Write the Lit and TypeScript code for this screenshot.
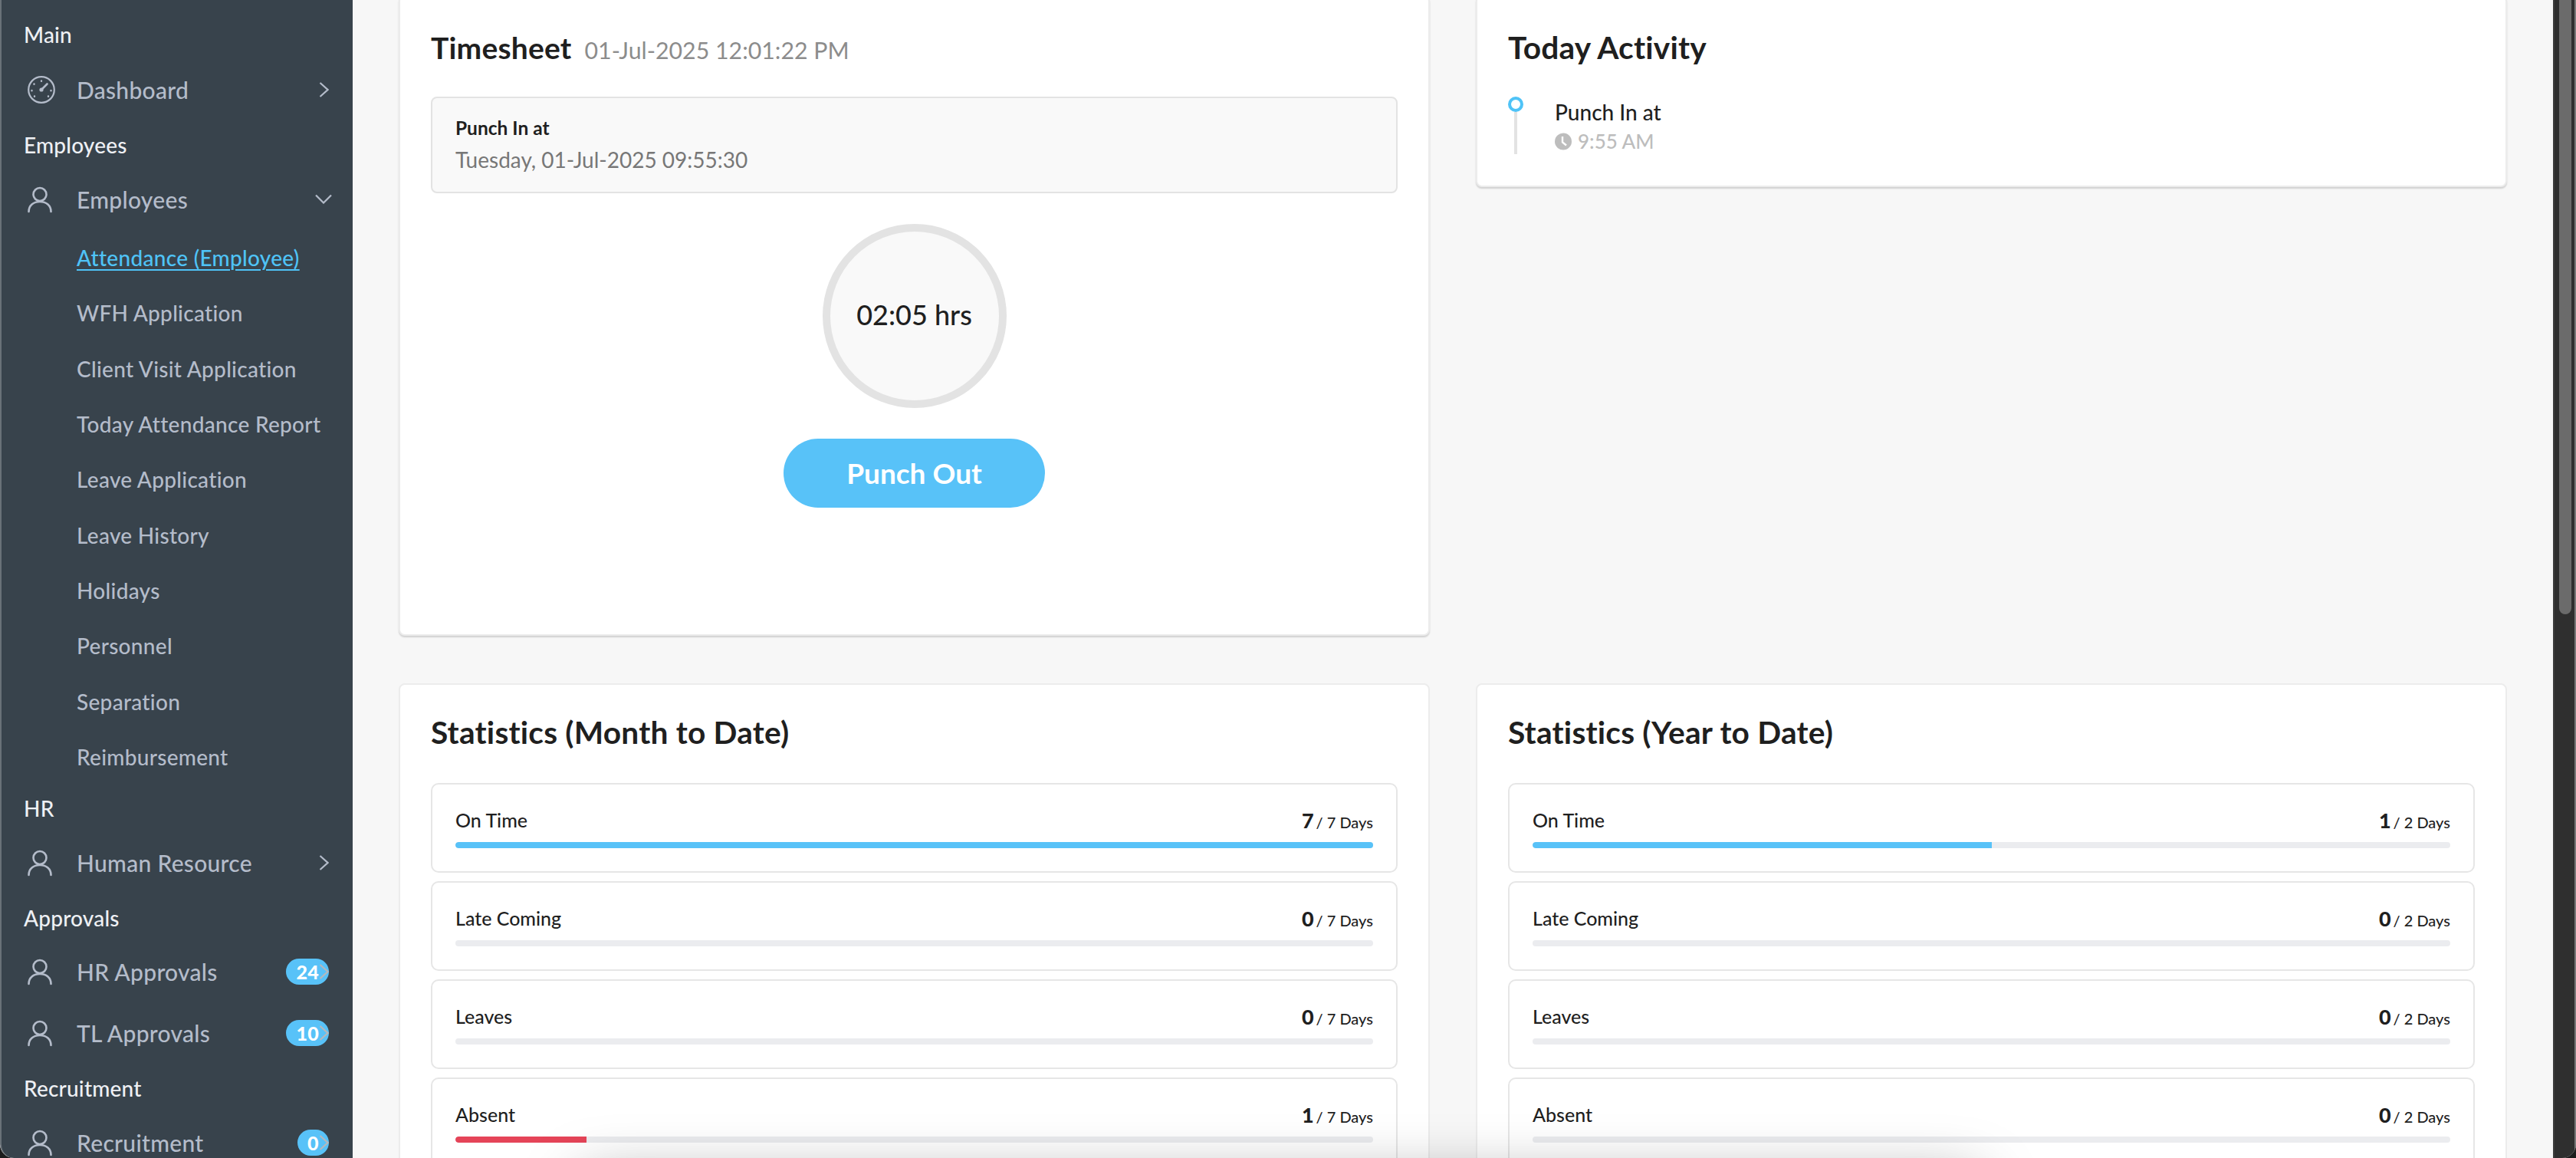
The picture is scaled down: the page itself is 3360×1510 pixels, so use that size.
import { LitElement, html, css } from "lit";
import { customElement } from "lit/decorators.js";

const userIcon = html`<svg class="ic" viewBox="0 0 36 36" fill="none" stroke="currentColor" stroke-width="2.6" stroke-linecap="round"><circle cx="16" cy="11.5" r="8.5"/><path d="M1.5 34c0-8 6-13 14.500-13s14.500 5 14.500 13"/></svg>`;
const gaugeIcon = html`<svg class="ic" viewBox="0 0 36 36" fill="none" stroke="currentColor" stroke-width="2.200" stroke-linecap="round"><circle cx="18" cy="18" r="16.800"/><circle cx="18" cy="18" r="2.600" fill="currentColor" stroke="none"/><path d="M18 18l7.500-7.500" stroke-width="2.600"/><path d="M18 6.500v.2M8.500 10.500v.2M5.500 19v.2M9 26.500v.2M27 26.500v.2M30.500 19v.2" stroke-width="2.400"/></svg>`;
const chevR = html`<svg class="chev" viewBox="0 0 13 20" fill="none" stroke="currentColor" stroke-width="2.200"><path d="M1.500 1l10 9-10 9"/></svg>`;
const chevD = html`<svg class="chevd" viewBox="0 0 22 13" fill="none" stroke="currentColor" stroke-width="2.200"><path d="M1 1.500l10 10 10-10"/></svg>`;

const subs = ["WFH Application", "Client Visit Application", "Today Attendance Report", "Leave Application", "Leave History", "Holidays", "Personnel", "Separation", "Reimbursement"];

interface Stat { label: string; val: number; color?: string; }

@customElement("app-root")
export class AppRoot extends LitElement {
  static styles = css`
    :host { display: block; width: 3360px; height: 1510px; overflow: hidden; position: relative; background: #1c1c1c; font-family: "Lato", "Liberation Sans", sans-serif; color: #1f1f1f; }
    * { box-sizing: border-box; }
    .win { width: 3360px; height: 1510px; display: flex; overflow: hidden; border-radius: 0 0 18px 18px; background: #f7f7f7; position: relative; }
    .side { width: 460px; flex: none; background: #38434c; border-left: 2px solid #697178; padding: 9px 0 0 29px; overflow: hidden; border-bottom-left-radius: 18px; }
    .label { height: 72px; display: flex; align-items: center; color: #eef0f4; font-size: 28px; font-weight: 500; letter-spacing: 0.2px; }
    .item { height: 72px; display: flex; align-items: center; color: #b4bcca; font-size: 30px; font-weight: 500; position: relative; padding-right: 31px; letter-spacing: 0.3px; }
    .item.b { height: 80px; }
    .up { margin-top: -1px; }
    .ic { width: 36px; height: 36px; margin-left: 5px; margin-right: 28px; flex: none; color: #b4bcca; }
    .chev { width: 13px; height: 20px; position: absolute; right: 31px; top: 50%; margin-top: -10px; color: #b4bcca; }
    .chevd { width: 22px; height: 13px; position: absolute; right: 27px; top: 29px; color: #b4bcca; }
    .sub { height: 72.3px; display: flex; align-items: center; padding-left: 69px; color: #b4bcca; font-size: 28px; font-weight: 500; letter-spacing: 0.3px; }
    .active { color: #4fc3f7; text-decoration: underline; text-underline-offset: 4px; text-decoration-thickness: 2px; }
    .first { margin-top: 4px; }
    .tight5 { margin-top: -5px; }
    .tight6 { margin-top: -6px; }
    .tight4 { margin-top: -4px; }
    .badge { position: absolute; right: 31px; top: 23px; height: 34px; border-radius: 17px; background: #58c2f8; color: #fff; font-size: 25px; font-weight: 900; display: flex; align-items: center; padding: 0 13px; min-width: 41px; }
    .badge + .chev { color: #b4b8bd; }
    .main { flex: 1; min-width: 0; padding: 0 60px; overflow: hidden; position: relative; }
    .grid { display: grid; grid-template-columns: 1fr 1fr; column-gap: 60px; margin-top: -6px; align-items: start; }
    .card { background: #fff; border: 2px solid #ececec; border-radius: 8px; padding: 43px 40px 0; }
    .shadow { box-shadow: 0 2px 2px rgba(0, 0, 0, 0.16); }
    .top { padding-top: 47px; }
    .ts { height: 835px; display: flex; flex-direction: column; }
    .act { height: 250px; }
    .stats { height: 700px; margin-top: 62px; }
    h2 { margin: 0; height: 38px; font-size: 40.700px; line-height: 38px; font-weight: 700; color: #1f1f1f; white-space: nowrap; letter-spacing: 0.2px; display: flex; align-items: baseline; }
    h2.ts-t { font-size: 39px; }
    h2 small { font-size: 30.300px; font-weight: 400; color: #8c8c8c; margin-left: 17px; letter-spacing: 0; }
    .box { margin-top: 45px; height: 126px; background: #f9f9f9; border: 2px solid #e3e3e3; border-radius: 8px; padding: 16px 30px 0; }
    .box b { display: block; font-size: 24.500px; line-height: 46px; font-weight: 700; color: #1f1f1f; }
    .box span { display: block; font-size: 28px; line-height: 36px; color: #777; }
    .circle { width: 240px; height: 240px; border: 10px solid #e3e3e3; border-radius: 50%; background: #f9f9f9; display: flex; align-items: center; justify-content: center; font-size: 36px; font-weight: 500; margin: 40px auto 0; color: #1f1f1f; padding-bottom: 4px; }
    .btn { width: 341px; height: 90px; border-radius: 45px; background: #58c2f8; color: #fff; font-size: 37px; font-weight: 700; margin: 40px auto 0; display: flex; align-items: center; justify-content: center; padding-bottom: 2px; }
    .tl { margin-top: 45px; display: flex; }
    .tlc { width: 20px; display: flex; flex-direction: column; align-items: center; margin-right: 41px; }
    .dot { width: 20px; height: 20px; border: 4px solid #4fc3f7; border-radius: 50%; }
    .line { width: 4px; height: 55px; background: #e3e3e3; }
    .tlt { font-size: 28px; line-height: 40px; color: #1f1f1f; font-weight: 500; }
    .tlm { display: flex; align-items: center; color: #bdbdbd; font-size: 26px; line-height: 36px; font-weight: 500; }
    .tlm svg { width: 22px; height: 23px; margin-right: 8px; }
    .rows { margin-top: 47px; display: flex; flex-direction: column; gap: 11px; }
    .row { height: 117px; border: 2px solid #e6e6e6; border-radius: 10px; padding: 26px 30px 0; flex: none; }
    .rh { display: flex; justify-content: space-between; align-items: center; height: 40px; font-size: 25px; font-weight: 500; color: #1f1f1f; }
    .rv { font-size: 20px; font-weight: 500; }
    .rv b { font-size: 27px; font-weight: 900; margin-right: -2px; }
    .track { margin-top: 9px; height: 8px; border-radius: 4px; background: #ebecef; overflow: hidden; }
    .fill { height: 100%; border-radius: 4px 0 0 4px; }
    .sb { width: 30px; flex: none; background: #2f2f2f; border-left: 2px solid #3c3c3c; border-right: 2px solid #777; padding-left: 6px; }
    .thumb { width: 16px; height: 801px; background: #6b6b6b; border-radius: 0 0 8px 8px; }
    .dock { position: absolute; left: 760px; bottom: -100px; width: 1820px; height: 70px; box-shadow: 0 0 80px rgba(0, 0, 0, 0.4); pointer-events: none; }
  `;

  private statRows(total: number, items: Stat[]) {
    return html`<div class="rows">${items.map((s) => html`
      <div class="row">
        <div class="rh"><span>${s.label}</span><span class="rv"><b>${s.val}</b> / ${total} Days</span></div>
        <div class="track"><div class="fill" style="width:${(s.val / total) * 100}%;background:${s.color ?? "#58c2f8"}"></div></div>
      </div>`)}</div>`;
  }

  render() {
    return html`<div class="win">
      <nav class="side">
        <div class="label">Main</div>
        <div class="item">${gaugeIcon}Dashboard${chevR}</div>
        <div class="label">Employees</div>
        <div class="item up">${userIcon}Employees${chevD}</div>
        <div class="sub first"><span class="active">Attendance (Employee)</span></div>
        ${subs.map((s) => html`<div class="sub">${s}</div>`)}
        <div class="label tight5">HR</div>
        <div class="item up">${userIcon}Human Resource${chevR}</div>
        <div class="label">Approvals</div>
        <div class="item b tight6">${userIcon}HR Approvals<span class="badge">24</span>${chevR}</div>
        <div class="item b">${userIcon}TL Approvals<span class="badge">10</span>${chevR}</div>
        <div class="label tight4">Recruitment</div>
        <div class="item b tight5">${userIcon}Recruitment<span class="badge">0</span>${chevR}</div>
      </nav>
      <main class="main">
        <div class="grid">
          <section class="card top shadow ts">
            <h2 class="ts-t">Timesheet <small>01-Jul-2025 12:01:22 PM</small></h2>
            <div class="box"><b>Punch In at</b><span>Tuesday, 01-Jul-2025 09:55:30</span></div>
            <div class="circle">02:05 hrs</div>
            <div class="btn">Punch Out</div>
          </section>
          <section class="card top shadow act">
            <h2>Today Activity</h2>
            <div class="tl">
              <div class="tlc"><div class="dot"></div><div class="line"></div></div>
              <div>
                <div class="tlt">Punch In at</div>
                <div class="tlm"><svg viewBox="0 0 22 22"><circle cx="11" cy="11" r="11" fill="#bdbdbd"/><path d="M10 4.500v7.500l5 4" fill="none" stroke="#fff" stroke-width="2.400"/></svg>9:55 AM</div>
              </div>
            </div>
          </section>
          <section class="card stats">
            <h2>Statistics (Month to Date)</h2>
            ${this.statRows(7, [{ label: "On Time", val: 7 }, { label: "Late Coming", val: 0 }, { label: "Leaves", val: 0 }, { label: "Absent", val: 1, color: "#e54458" }])}
          </section>
          <section class="card stats">
            <h2>Statistics (Year to Date)</h2>
            ${this.statRows(2, [{ label: "On Time", val: 1 }, { label: "Late Coming", val: 0 }, { label: "Leaves", val: 0 }, { label: "Absent", val: 0 }])}
          </section>
        </div>
      </main>
      <div class="sb"><div class="thumb"></div></div>
      <div class="dock"></div>
    </div>`;
  }
}
